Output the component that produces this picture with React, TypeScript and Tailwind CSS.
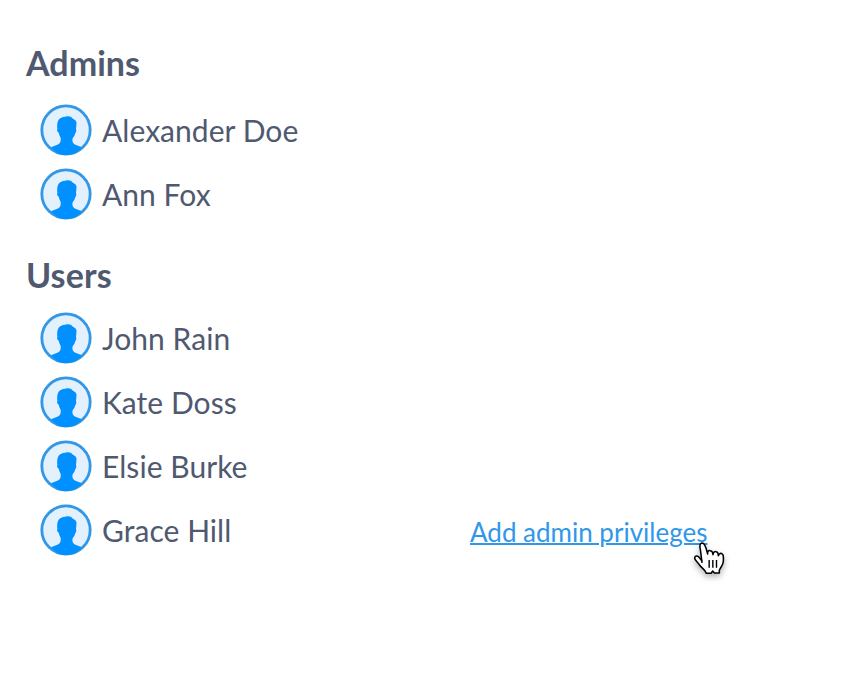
import React from "react";

const admins = ["Alexander Doe", "Ann Fox"];
const users = ["John Rain", "Kate Doss", "Elsie Burke", "Grace Hill"];

function Avatar() {
  return (
    <svg className="h-[60px] w-[60px] shrink-0" viewBox="0 0 180 180" aria-hidden="true">
      <circle cx="90" cy="90" r="72" fill="#e3f1fe" />
      <circle cx="90" cy="90" r="72.5" fill="none" stroke="#3197e8" strokeWidth="8.5" />
      <path
        fill="#0090ff"
        d="M45 142 L60 136 C69 133 73 129 74 122 L74 113 C71 108 69 103 68 98 C64 96 62 91 64 87 C63 79 63 69 67 61 C71 54 79 50 88 50 C96 47 106 49 111 56 L117 60 C124 65 121 76 120 87 C122 90 121 97 118 99 C117 105 114 110 110 114 L109 122 C110 129 114 133 122 136 L138 142 C126 158 109 165 90 165 C71 165 57 157 45 142 Z"
      />
    </svg>
  );
}

function HandCursor() {
  return (
    <svg
      className="pointer-events-none absolute -right-[28px] -bottom-[37px] h-[50px] w-[50px] drop-shadow-[0_3px_3px_rgba(0,0,0,0.3)]"
      viewBox="0 0 150 150"
      aria-hidden="true"
    >
      <path
        d="M51 82 L46 43 C43 32 45 25 51 24 C58 24 60 31 63 39 L68 57 C67 47 72 46 76 47 C82 48 84 52 84 59 C85 50 90 49 94 50 C100 51 100 57 100 62 C103 54 108 54 112 57 C117 61 115 70 115 79 C115 90 107 96 103 106 L103 114 L88 114 L83 108 L78 115 L64 115 C60 103 50 99 44 91 C39 82 28 75 29 68 C31 60 40 63 44 69 L51 78"
        fill="white"
        stroke="black"
        strokeWidth="4.6"
        strokeLinejoin="round"
        strokeLinecap="round"
      />
      <path d="M72.5 75V98 M83.5 75V98 M94.5 75V98" stroke="black" strokeWidth="4.2" />
    </svg>
  );
}

function Person({ name, children }: { name: string; children?: React.ReactNode }) {
  return (
    <li className="flex h-16 items-center">
      <Avatar />
      <span className="ml-[6px] w-[368px] text-[30px] leading-[36px] tracking-[0.05px]">{name}</span>
      {children}
    </li>
  );
}

export default function App() {
  return (
    <main className="h-[700px] w-[860px] overflow-hidden bg-white pt-[41px] pl-[26px] font-['Lato',sans-serif] text-[#4f596f]">
      <section>
        <h2 className="mb-[13px] text-[34px] leading-[44px] font-bold tracking-[0.05px]">Admins</h2>
        <ul className="pl-[10px]">
          {admins.map((name) => (
            <Person key={name} name={name} />
          ))}
        </ul>
      </section>
      <section className="mt-[27px]">
        <h2 className="mb-[9px] text-[34px] leading-[44px] font-bold tracking-[0.1px]">Users</h2>
        <ul className="pl-[10px]">
          {users.map((name) => (
            <Person key={name} name={name}>
              {name === "Grace Hill" && (
                <span className="relative mt-[4px]">
                  <a
                    href="#"
                    className="text-[26px] leading-[32px] whitespace-nowrap text-[#3197e8] underline decoration-2"
                  >
                    Add admin privileges
                  </a>
                  <HandCursor />
                </span>
              )}
            </Person>
          ))}
        </ul>
      </section>
    </main>
  );
}
